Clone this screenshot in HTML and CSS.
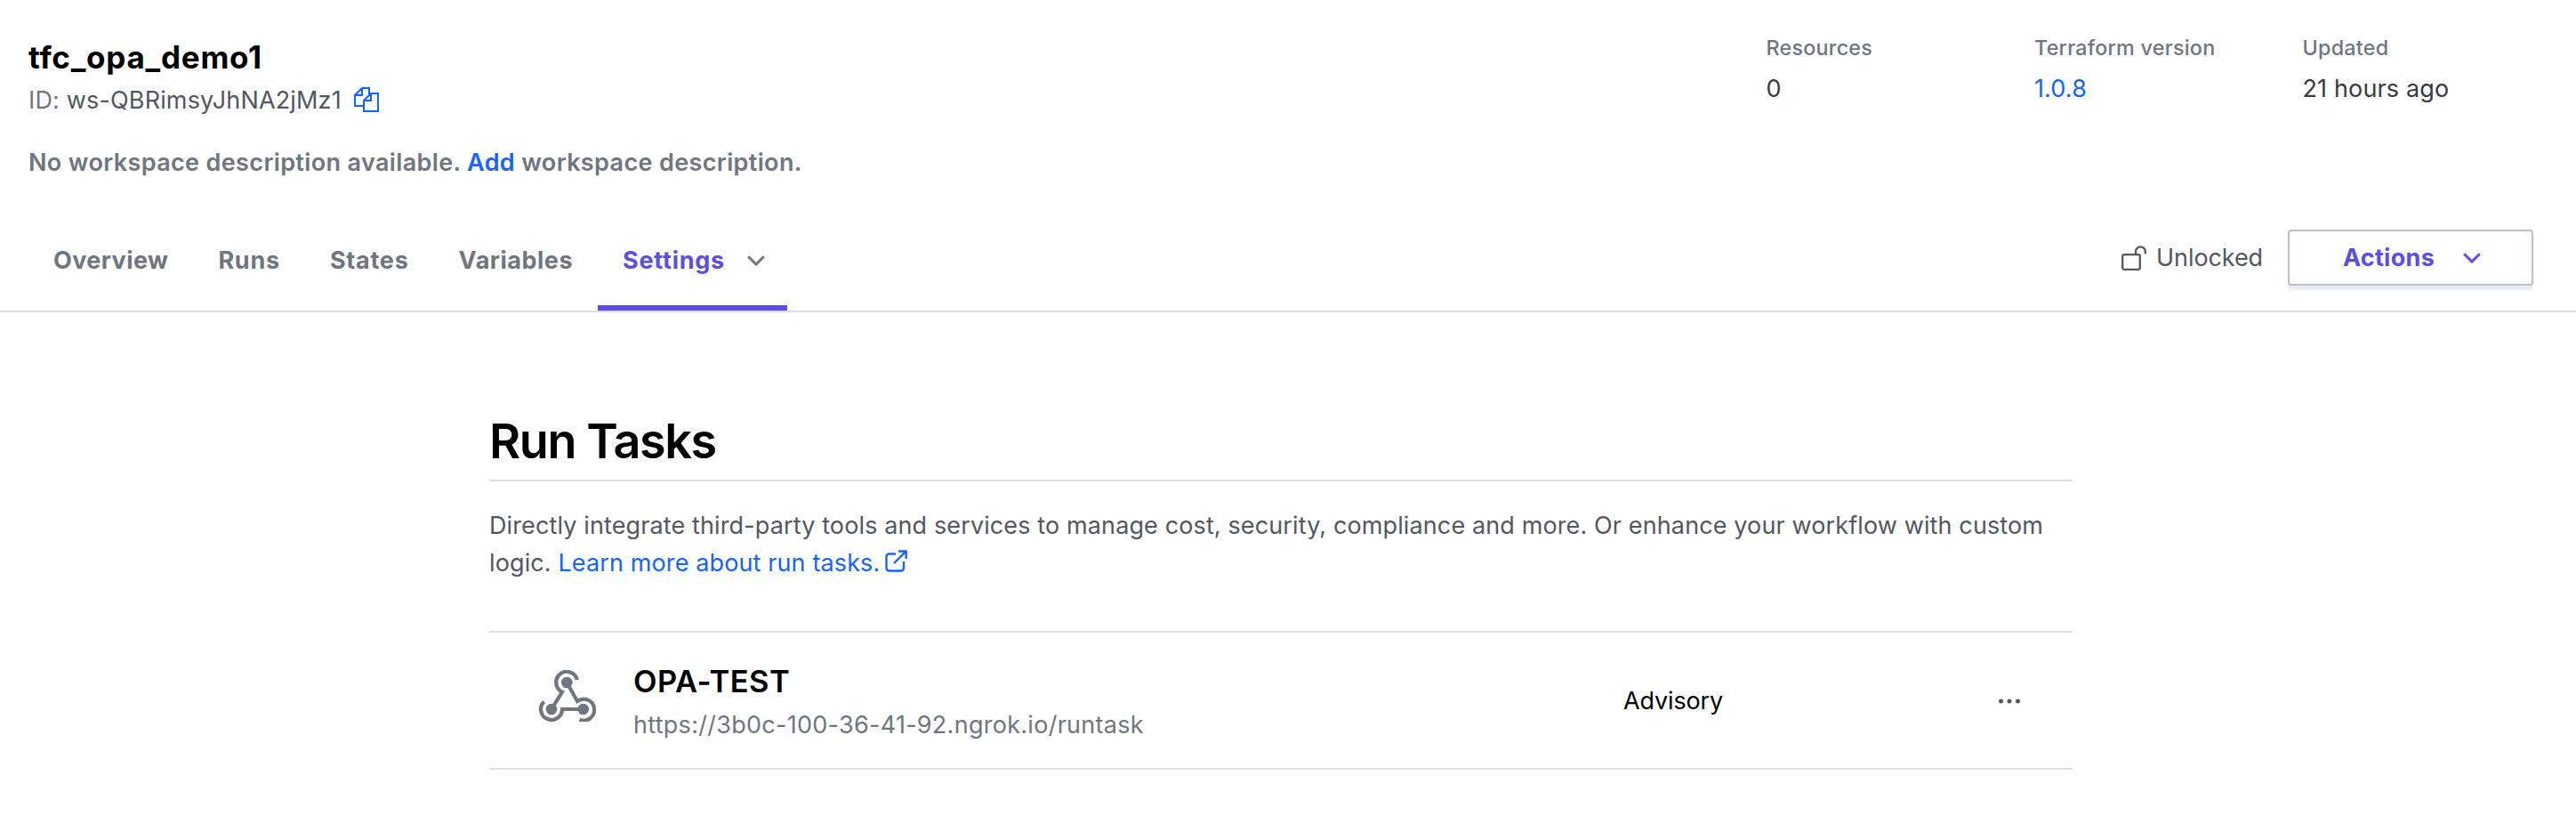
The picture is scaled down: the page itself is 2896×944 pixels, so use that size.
FILE: index.html
```
<!DOCTYPE html>
<html lang="en">
<head>
<meta charset="utf-8">
<title>tfc_opa_demo1 - Run Tasks</title>
<link rel="stylesheet" href="styles.css">
</head>
<body>
<header class="header">
  <div class="summary">
    <div class="identity">
      <h2 class="name">tfc_opa_demo1</h2>
      <div class="id-row"><span><span class="label">ID:</span> ws-QBRimsyJhNA2jMz1</span>
        <svg class="copy" width="28" height="28" viewBox="0 0 28 28" fill="none" stroke="currentColor" stroke-width="2"><path d="M11 21H1V9l8-8h8v7M9 1v8H1M11 27V15l8-8h8v20zM19 7v8h-8"/></svg>
      </div>
      <p class="description">No workspace description available. <a class="link">Add</a> workspace description.</p>
    </div>
    <dl class="meta">
      <div class="meta-item"><dt>Resources</dt><dd>0</dd></div>
      <div class="meta-item"><dt>Terraform version</dt><dd><a class="link">1.0.8</a></dd></div>
      <div class="meta-item"><dt>Updated</dt><dd>21 hours ago</dd></div>
    </dl>
  </div>
  <div class="bar">
    <nav class="tabs">
      <a class="tab">Overview</a>
      <a class="tab wide">Runs</a>
      <a class="tab wide">States</a>
      <a class="tab medium">Variables</a>
      <a class="tab wide active">Settings
        <svg class="chevron" width="20" height="12" viewBox="0 0 20 12" fill="none" stroke="currentColor" stroke-width="3"><path d="M1.2 1.2 10 10l8.8-8.8"/></svg></a>
    </nav>
    <div class="controls">
      <div class="lock"><svg width="28" height="28" viewBox="0 0 28 28" fill="none" stroke="currentColor" stroke-width="2.3"><rect x="1.200" y="10.200" width="19.600" height="16.600" rx="2"/><path d="M16 10V6.700a5.400 5.400 0 0 1 10.800 0V9.300"/></svg>Unlocked</div>
      <button class="actions">Actions
        <svg width="20" height="12" viewBox="0 0 20 12" fill="none" stroke="currentColor" stroke-width="3"><path d="M1.2 1.2 10 10l8.8-8.8"/></svg></button>
    </div>
  </div>
</header>
<main class="content">
  <h1 class="heading">Run Tasks</h1>
  <p class="intro">Directly integrate third-party tools and services to manage cost, security, compliance and more. Or enhance your workflow with custom<br>logic. <a class="link">Learn more about run tasks.<svg class="external" width="25" height="25" viewBox="0 0 25 25" fill="none" stroke="currentColor" stroke-width="2.4"><path d="M12 4.500H4.500a3 3 0 0 0-3 3V20.500a3 3 0 0 0 3 3H18a3 3 0 0 0 3-3V13M10 15 23.500 1.500M15 1.500h8.700V10"/></svg></a></p>
  <div class="task">
    <svg class="hook" width="64" height="58" viewBox="0 0 64 58" fill="none" stroke="currentColor" stroke-width="4.200"><g fill="currentColor" stroke="none"><circle cx="31.300" cy="14" r="6.300"/><circle cx="14" cy="44" r="6.300"/><circle cx="49.700" cy="44" r="6.300"/></g><path d="M42.900 11A12 12 0 1 0 26 24.600L14 44M31.300 14 43 35A12 12 0 1 1 45.500 55.700M5.500 35.500A12 12 0 1 0 26 44H49.700"/></svg>
    <div class="task-text">
      <h3 class="task-name">OPA-TEST</h3>
      <div class="task-url">https://3b0c-100-36-41-92.ngrok.io/runtask</div>
    </div>
    <div class="level">Advisory</div>
    <svg class="more" width="26" height="8" viewBox="0 0 26 8" fill="currentColor"><circle cx="3.500" cy="4" r="2.500"/><circle cx="13" cy="4" r="2.500"/><circle cx="22.500" cy="4" r="2.500"/></svg>
  </div>
</main>
</body>
</html>
```
FILE: styles.css
```
* { box-sizing: border-box; }
body { margin: 0; background: #fff; color: #000; font-family: Inter, "Liberation Sans", sans-serif; font-size: 27px; line-height: 42px; }
h1, h2, h3, p, dl, dd { margin: 0; }
svg { flex: none; }
.link { color: #1563ff; }
.header { border-bottom: 2px solid #dce0e6; }
.summary { display: flex; justify-content: space-between; padding: 34px 6px 0 32px; height: 236px; }
.identity { padding-top: 8px; }
.name { font-size: 35px; line-height: 44px; font-weight: 700; letter-spacing: 0.75px; }
.id-row { display: flex; align-items: center; gap: 14px; margin-top: 6px; color: #525761; letter-spacing: 0.16px; }
.label { color: #6f7682; }
.copy { color: #1563ff; margin-top: -2px; }
.description { margin-top: 28px; font-weight: 600; color: #6f7682; letter-spacing: 0.36px; }
.meta { display: flex; }
.meta-item { width: 301.5px; }
.meta dt { font-size: 23.3px; line-height: 40px; font-weight: 500; color: #6f7682; letter-spacing: 0.25px; }
.meta dd { margin-top: 5px; color: #373a42; letter-spacing: 0.14px; }
.bar { display: flex; justify-content: space-between; height: 113px; padding: 0 48px 0 32px; }
.tabs { display: flex; }
.tab { padding: 36px 28px 0; font-weight: 700; color: #6f7682; letter-spacing: 0.4px; }
.tab.medium { letter-spacing: 0.5px; }
.tab.wide { letter-spacing: 0.75px; }
.tab.active { display: flex; align-items: flex-start; gap: 25px; padding-right: 25px; color: #5c4ee5; border-bottom: 6px solid #5c4ee5; }
.chevron { color: #6f7682; margin-top: 15px; }
.controls { display: flex; align-items: flex-start; gap: 28px; padding-top: 22px; }
.lock { display: flex; align-items: center; gap: 11px; height: 63px; color: #525761; letter-spacing: -0.1px; }
.actions { display: flex; align-items: center; justify-content: center; gap: 32px; width: 276px; height: 63px; padding: 0 0 0 3px; font: inherit; font-weight: 700; color: #5c4ee5; background: #fff; border: 2px solid #bac1cc; border-radius: 4px; box-shadow: 0 5px 2px #ebecef; letter-spacing: 0.3px; }
.content { width: 1780px; margin-left: 550px; padding-top: 110px; }
.heading { font-size: 54px; line-height: 70px; font-weight: 600; padding-bottom: 8px; border-bottom: 2px solid #dce0e6; letter-spacing: -1.45px; }
.intro { height: 84px; margin-top: 29px; color: #525761; letter-spacing: 0.12px; white-space: nowrap; }
.external { margin-left: 6px; vertical-align: -1px; }
.task { display: flex; height: 156px; margin-top: 55px; padding: 0 58px 0 56px; border: solid #dce0e6; border-width: 2px 0; }
.hook { color: #6f7682; margin-top: 42px; }
.task-text { width: 1113px; margin-left: 42px; padding-top: 33px; }
.task-name { font-size: 34.5px; line-height: 44px; font-weight: 600; letter-spacing: 0.5px; }
.task-url { margin-top: 6px; color: #6f7682; letter-spacing: 0.28px; }
.level { padding-top: 56px; letter-spacing: -0.15px; }
.more { color: #525761; margin: 73px 0 0 auto; }
```
